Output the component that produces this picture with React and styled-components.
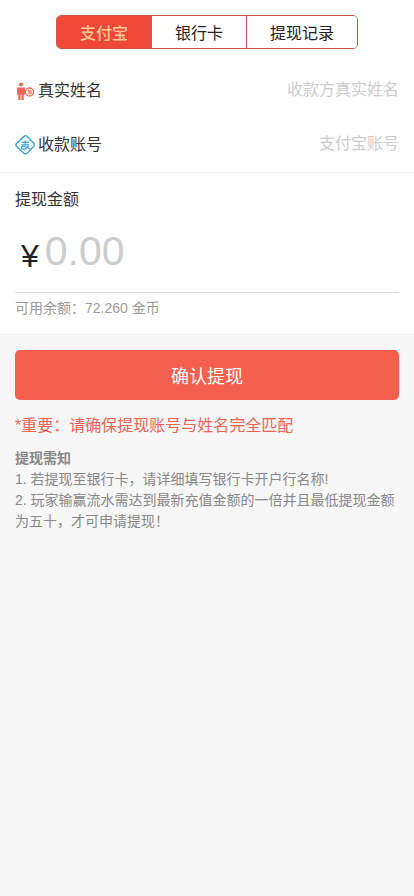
import styled, { createGlobalStyle } from 'styled-components';

const GlobalStyle = createGlobalStyle`
  html, body {
    margin: 0;
    padding: 0;
    background: #f7f7f7;
    font-family: "Liberation Sans", "Noto Sans CJK SC", sans-serif;
  }
  * {
    box-sizing: border-box;
  }
`;

const Page = styled.div`
  min-height: 896px;
  background: #f7f7f7;
`;

const Panel = styled.div`
  background: #fff;
  border-bottom: 1px solid #eee;
`;

const TabsWrap = styled.div`
  display: flex;
  justify-content: center;
  padding: 15px 0 14px;
`;

const Tabs = styled.div`
  display: flex;
  height: 34px;
  width: 302px;
  border: 1px solid #c9564c;
  border-radius: 5px;
  overflow: hidden;
`;

const Tab = styled.div`
  flex: ${(p) => p.$grow} 0 0;
  display: flex;
  align-items: center;
  justify-content: center;
  font-size: 16px;
  font-weight: ${(p) => (p.$active ? 500 : 400)};
  color: ${(p) => (p.$active ? '#ffc88f' : '#222')};
  background: ${(p) => (p.$active ? '#f0473b' : '#fff')};
  & + & {
    border-left: 1px solid #c9564c;
  }
`;

const Row = styled.label`
  display: flex;
  align-items: center;
  height: 54px;
  padding: 0 15px;
  font-size: 16px;
  color: #333;
`;

const RowIcon = styled.svg`
  width: 23px;
  height: 22px;
  flex: none;
  margin-top: 1px;
`;

const RowLabel = styled.span`
  margin-bottom: 2px;
`;

const RowInput = styled.input`
  flex: 1;
  min-width: 0;
  border: 0;
  outline: 0;
  padding: 0;
  background: none;
  text-align: right;
  font: inherit;
  &::placeholder {
    color: #ccc;
    opacity: 1;
  }
`;

const AmountBlock = styled.div`
  margin-top: 1px;
  padding: 17px 15px 16px;
  border-top: 1px solid #eee;
`;

const AmountTitle = styled.div`
  font-size: 16px;
  line-height: 20px;
  color: #333;
`;

const AmountRow = styled.div`
  display: flex;
  align-items: center;
  height: 83px;
  border-bottom: 1px solid #ddd;
  padding-left: 6px;
`;

const Yen = styled.span`
  font-size: 32px;
  color: #222;
  margin-top: 10px;
  margin-right: 6px;
`;

const AmountInput = styled.input`
  flex: 1;
  min-width: 0;
  border: 0;
  outline: 0;
  padding: 0;
  background: none;
  font-family: inherit;
  font-size: 41px;
  &::placeholder {
    color: #ccc;
    opacity: 1;
  }
`;

const Balance = styled.div`
  font-size: 14px;
  line-height: 20px;
  margin-top: 5px;
  color: #999;
`;

const Body = styled.div`
  padding: 15px;
`;

const SubmitButton = styled.button`
  display: block;
  width: 100%;
  height: 50px;
  border: 0;
  border-radius: 5px;
  background: #f5604e;
  color: #fff;
  font-family: inherit;
  font-size: 18px;
`;

const Warning = styled.div`
  margin-top: 16px;
  font-size: 16px;
  line-height: 20px;
  color: #ea6555;
`;

const Notes = styled.div`
  margin-top: 12px;
  font-size: 14px;
  line-height: 21px;
  color: #888;
  strong {
    display: block;
  }
`;

const PersonIcon = () => (
  <RowIcon viewBox="0 0 23 22">
    <circle cx="6" cy="4.500" r="2.100" fill="#ec6a59" />
    <path d="M2 7.500h8v7H8.800V20H6.400v-5H5.600v5H3.200v-5.500H2z" fill="#ec6a59" />
    <circle cx="14.500" cy="12" r="4" fill="#fff" stroke="#ec6a59" strokeWidth="1.300" />
    <path d="M16 10.300h-2.500v1.600H16v1.800h-2.600" fill="none" stroke="#ec6a59" strokeWidth="1.100" />
  </RowIcon>
);

const AlipayIcon = () => (
  <RowIcon viewBox="0 0 23 22">
    <path
      d="M9 2.400Q10.500 1.200 12 2.400L18.800 9.200Q20 11 18.800 12.400L12.400 19Q10.500 20.600 8.800 19.200L1.400 12.200Q0.400 11 1.400 9.800Z"
      fill="none"
      stroke="#3aa3d8"
      strokeWidth="1.400"
    />
    <path
      d="M6.500 8.300h7.500M10.200 6.300v4.200M6.300 10.800h7.500c-1 2.900-3.400 4.300-5.700 4.300-2 0-2.400-2.500-.4-2.800 2-.3 5 1.300 8.800 3.300"
      fill="none"
      stroke="#3aa3d8"
      strokeWidth="1.200"
    />
  </RowIcon>
);

export default function App() {
  return (
    <Page>
      <GlobalStyle />
      <Panel>
        <TabsWrap>
          <Tabs>
            <Tab $active $grow={95}>支付宝</Tab>
            <Tab $grow={95}>银行卡</Tab>
            <Tab $grow={111}>提现记录</Tab>
          </Tabs>
        </TabsWrap>
        <Row>
          <PersonIcon />
          <RowLabel>真实姓名</RowLabel>
          <RowInput placeholder="收款方真实姓名" />
        </Row>
        <Row>
          <AlipayIcon />
          <RowLabel>收款账号</RowLabel>
          <RowInput placeholder="支付宝账号" />
        </Row>
        <AmountBlock>
          <AmountTitle>提现金额</AmountTitle>
          <AmountRow>
            <Yen>¥</Yen>
            <AmountInput placeholder="0.00" />
          </AmountRow>
          <Balance>可用余额：72.260 金币</Balance>
        </AmountBlock>
      </Panel>
      <Body>
        <SubmitButton>确认提现</SubmitButton>
        <Warning>*重要：请确保提现账号与姓名完全匹配</Warning>
        <Notes>
          <strong>提现需知</strong>
          1. 若提现至银行卡，请详细填写银行卡开户行名称!
          <br />
          2. 玩家输赢流水需达到最新充值金额的一倍并且最低提现金额为五十，才可申请提现！
        </Notes>
      </Body>
    </Page>
  );
}
